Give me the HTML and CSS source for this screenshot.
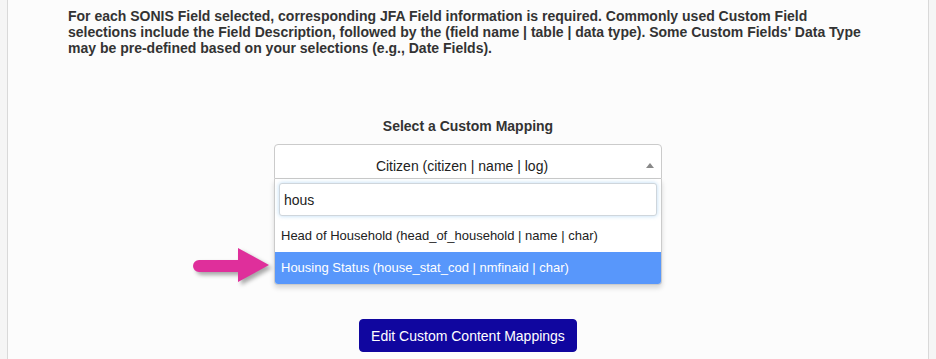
FILE: index.html
```html
<!DOCTYPE html>
<html lang="en">
<head>
    <meta charset="UTF-8">
    <meta name="viewport" content="width=device-width, initial-scale=1.0">
    <title>Custom Mappings</title>
    <link rel="stylesheet" href="styles.css">
</head>
<body>
    <div class="panel">
        <p class="intro">
            For each SONIS Field selected, corresponding JFA Field information is required. Commonly used Custom Field
            selections include the Field Description, followed by the (field name | table | data type). Some Custom Fields' Data Type
            may be pre-defined based on your selections (e.g., Date Fields).
        </p>

        <div class="mapping">
            <label class="mapping-label">Select a Custom Mapping</label>

            <div class="select-wrap">
                <div class="select-box">
                    Citizen (citizen | name | log)
                    <span class="select-arrow"></span>
                </div>

                <!-- open dropdown -->
                <div class="dropdown">
                    <div class="search">
                        <input type="text" class="search-input" value="hous">
                    </div>
                    <ul class="results">
                        <li class="result">Head of Household (head_of_household | name | char)</li>
                        <li class="result highlighted">Housing Status (house_stat_cod | nmfinaid | char)</li>
                    </ul>

                    <svg class="pointer" width="82" height="40" viewBox="0 0 82 40">
                        <path d="M8 14 H47 V2 L78 19 L47 36 V26 H8 A6 6 0 0 1 8 14 Z" fill="#df2f9b"/>
                    </svg>
                </div>
            </div>
        </div>

        <div class="actions">
            <button class="edit-button">Edit Custom Content Mappings</button>
        </div>
    </div>
</body>
</html>
```

FILE: styles.css
```css
* {
    margin: 0;
    padding: 0;
    box-sizing: border-box;
}

body {
    background-color: #f5f5f5;
    font-family: 'Liberation Sans', Arial, sans-serif;
    font-size: 14px;
    color: #333;
}

.panel {
    margin-left: 7px;
    width: 922px;
    min-height: 100vh;
    background-color: #fcfcfc;
    border-left: 1px solid #d9d9d9;
    border-right: 1px solid #d9d9d9;
    padding-top: 8px;
}

.intro {
    width: 800px;
    margin: 0 auto;
    font-weight: bold;
    line-height: 16px;
}

.mapping {
    margin-top: 60px;
    display: flex;
    flex-direction: column;
    align-items: center;
}

.mapping-label {
    font-weight: bold;
    line-height: 20px;
    margin-bottom: 8px;
}

.select-wrap {
    position: relative;
    width: 388px;
}

.select-box {
    position: relative;
    height: 35px;
    border: 1px solid #cbcbcb;
    border-radius: 4px 4px 0 0;
    background-color: #fff;
    text-align: center;
    line-height: 20px;
    padding: 11px 20px 0 8px;
    color: #222;
}

.select-arrow {
    position: absolute;
    right: 7px;
    top: 18px;
    width: 0;
    height: 0;
    border-left: 4px solid transparent;
    border-right: 4px solid transparent;
    border-bottom: 5px solid #888;
}

.dropdown {
    position: absolute;
    top: 35px;
    left: 0;
    width: 388px;
    background-color: #fff;
    border: 1px solid #cbcbcb;
    border-top: none;
    border-radius: 0 0 4px 4px;
    box-shadow: 0 3px 5px rgba(0, 0, 0, 0.15);
}

.search {
    padding: 4px;
}

.search-input {
    display: block;
    width: 100%;
    height: 33px;
    border: 1px solid #cfd6dc;
    border-radius: 3px;
    padding: 0 4px;
    font-family: 'Liberation Sans', Arial, sans-serif;
    font-size: 14px;
    color: #222;
    box-shadow: 0 0 4px rgba(102, 175, 233, 0.45);
    outline: none;
}

.results {
    list-style: none;
}

.result {
    font-size: 13px;
    line-height: 20px;
    padding: 6px 6px;
    color: #222;
}

.result.highlighted {
    background-color: #5897fb;
    color: #fff;
    border-radius: 0 0 3px 3px;
}

.pointer {
    position: absolute;
    left: -84px;
    top: 67px;
    filter: drop-shadow(3px 3px 2px rgba(0, 0, 0, 0.35));
}

.actions {
    margin-top: 140px;
    text-align: center;
}

.edit-button {
    background-color: #10069f;
    color: #fff;
    border: 1px solid #10069f;
    border-radius: 4px;
    padding: 6px 11px 5px;
    font-family: 'Liberation Sans', Arial, sans-serif;
    font-size: 14px;
    line-height: 20px;
    cursor: pointer;
}
```
